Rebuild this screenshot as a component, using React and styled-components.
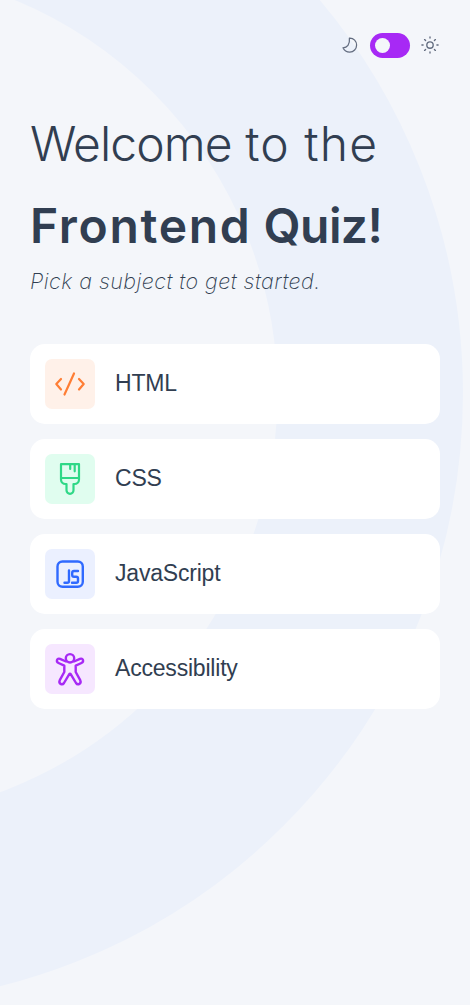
import React from "react";
import styled, { createGlobalStyle } from "styled-components";

const GlobalStyle = createGlobalStyle`
  * { box-sizing: border-box; }
  body { margin: 0; background: #f4f6fa; color: #313e51; }
`;

const Page = styled.main`
  position: relative;
  isolation: isolate;
  overflow: hidden;
  min-height: 1005px;
  padding: 30px 30px 0;
`;

const Backdrop = styled.svg`
  position: absolute;
  inset: 0;
  z-index: -1;
`;

const ThemeBar = styled.header`
  display: flex;
  justify-content: flex-end;
  align-items: center;
  gap: 10px;
  height: 30px;
  svg { display: block; }
`;

const Toggle = styled.button`
  display: flex;
  align-items: center;
  width: 40px;
  height: 25px;
  padding: 0 5px;
  border: 0;
  border-radius: 13px;
  background: #a729f5;
`;

const Knob = styled.span`
  width: 15px;
  height: 15px;
  border-radius: 50%;
  background: #f4f6fa;
`;

const Title = styled.h1`
  display: flex;
  flex-direction: column;
  margin: 43px 0 0;
  white-space: nowrap;
`;

const TitleLine = styled.span`
  font-family: Inter, sans-serif;
  font-size: 48px;
  line-height: 82px;
  font-weight: ${(p) => (p.$strong ? 600 : 300)};
`;

const Word = styled.span`
  letter-spacing: ${(p) => p.$tracking}px;
`;

const Subtitle = styled.p`
  margin: 0;
  font: italic 200 21.5px/28px Inter, sans-serif;
  font-feature-settings: "cv11" 1;
  letter-spacing: 0.47px;
  padding-bottom: 2px;
  white-space: nowrap;
`;

const Subjects = styled.nav`
  display: flex;
  flex-direction: column;
  gap: 15px;
  margin-top: 47px;
`;

const Subject = styled.button`
  display: flex;
  align-items: center;
  gap: 20px;
  height: 80px;
  padding: 0 15px;
  border: 0;
  border-radius: 15px;
  background: #fff;
  color: #313e51;
  text-align: left;
`;

const IconTile = styled.span`
  display: grid;
  place-items: center;
  width: 50px;
  height: 50px;
  border-radius: 7px;
  color: ${(p) => p.$ink};
  background: ${(p) => p.$tint};
`;

const Label = styled.span`
  font: 400 23px/28px "Liberation Sans", sans-serif;
  letter-spacing: -0.2px;
  padding-bottom: 2px;
`;

const Glyph = ({ children, width = 2.3 }) => (
  <svg width="50" height="50" viewBox="0 0 50 50" fill="none" stroke="currentColor"
    strokeWidth={width} strokeLinecap="round" strokeLinejoin="round">
    {children}
  </svg>
);

const subjects = [
  {
    name: "HTML", ink: "#ff7e35", tint: "#fff1e9",
    icon: <Glyph width={2.2}><path d="M16 20l-4.700 5 4.700 5.500M34 20l4.700 5-4.700 5.500M29 14.500L19.500 35.500" /></Glyph>,
  },
  {
    name: "CSS", ink: "#2fd887", tint: "#e0fdef",
    icon: (
      <Glyph width={2.2}>
        <path d="M16 10.200H34V25.500a4.500 4.500 0 0 1-4.500 4.500H28.500V36.300a3.500 3.500 0 0 1-7 0V30H20.500a4.500 4.500 0 0 1-4.500-4.500zM16 24H34M25.200 10.500V15M29.700 10.500V17.300" />
      </Glyph>
    ),
  },
  {
    name: "JavaScript", ink: "#306aff", tint: "#ebf0ff",
    icon: (
      <Glyph width={2.4}>
        <rect x="12.500" y="12.500" width="25.300" height="25.300" rx="5" />
        <path d="M24 21.500V32a1.800 1.800 0 0 1-1.800 1.800H19.500M33 22H29a1.800 1.800 0 0 0-1.800 1.800V26a1.800 1.800 0 0 0 1.800 1.800h2.200a1.800 1.800 0 0 1 1.800 1.800V32a1.800 1.800 0 0 1-1.800 1.800H27" />
      </Glyph>
    ),
  },
  {
    name: "Accessibility", ink: "#a729f5", tint: "#f6e7ff",
    icon: (
      <Glyph width={2.4}>
        <circle cx="25" cy="14.300" r="4.200" />
        <path d="M21 17.500L15 14.800C12 13.600 10.700 17.700 13.500 19L19.300 21.700V28L14.800 36.200C13.200 39.500 17.200 41.800 19 39L24.300 30.200Q25 29 25.700 30.200L31 39C32.800 41.800 36.800 39.500 35.200 36.200L30.700 28V21.700L36.500 19C39.300 17.700 38 13.600 35 14.800L29 17.500" />
      </Glyph>
    ),
  },
];

function Moon() {
  return (
    <svg width="20" height="20" viewBox="0 0 20 20" fill="none" stroke="#626c7f"
      strokeWidth="1.250" strokeLinejoin="round">
      <path d="M9.400 3.100C13.800 2.900 16.600 6.300 16.600 10C16.600 14 13.600 17.100 9.800 17.100C6.600 17.100 4.100 15.300 3 12.800C7.100 12.800 10.100 9.700 9.400 3.100Z" />
    </svg>
  );
}

function Sun() {
  return (
    <svg width="20" height="20" viewBox="0 0 20 20" fill="none" stroke="#626c7f"
      strokeWidth="1.350" strokeLinecap="round">
      <circle cx="10" cy="10" r="3.200" />
      <path d="M10 1.900v1.200M10 16.900v1.200M1.900 10h1.200M16.900 10h1.200M4.600 4.600l1 1M14.400 14.400l1 1M4.600 15.400l1-1M14.400 5.600l1-1" />
    </svg>
  );
}

export default function App() {
  return (
    <>
      <GlobalStyle />
      <Page>
        <Backdrop width="470" height="1005" aria-hidden="true">
          <circle cx="-148.200" cy="393.200" r="518.400" fill="none" stroke="#ecf1fa" strokeWidth="185.500" />
        </Backdrop>
        <ThemeBar>
          <Moon />
          <Toggle aria-label="Toggle theme"><Knob /></Toggle>
          <Sun />
        </ThemeBar>
        <Title>
          <TitleLine>
            <Word $tracking={-0.9}>Welcome</Word> <Word $tracking={1.1}>to the</Word>
          </TitleLine>
          <TitleLine $strong>
            <Word $tracking={1.7}>Frontend</Word> <Word $tracking={-0.6}>Quiz!</Word>
          </TitleLine>
        </Title>
        <Subtitle>Pick a subject to get started.</Subtitle>
        <Subjects>
          {subjects.map((s) => (
            <Subject key={s.name}>
              <IconTile $ink={s.ink} $tint={s.tint}>{s.icon}</IconTile>
              <Label>{s.name}</Label>
            </Subject>
          ))}
        </Subjects>
      </Page>
    </>
  );
}
